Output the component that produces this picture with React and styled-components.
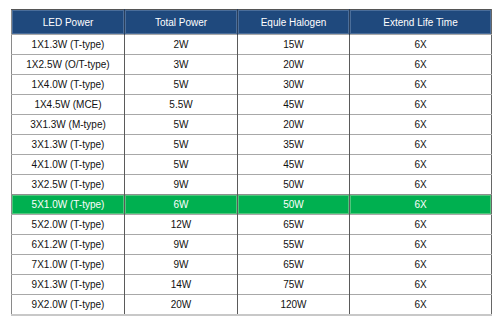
import styled, { createGlobalStyle } from "styled-components";

const GlobalStyle = createGlobalStyle`
  body {
    margin: 0;
    background: #fff;
    font-family: "Liberation Sans", Arial, sans-serif;
  }
`;

const Page = styled.div`
  padding: 9px 0 0 11px;
`;

const Table = styled.table`
  width: 481px;
  border-collapse: collapse;
  table-layout: fixed;
  font-size: 10px;
  color: #111;
  border-left: 1px solid #8a8a8a;
  border-right: 1px solid #666;
  border-top: 1px solid #555;
  border-bottom: 2px solid #c8c8c8;
`;

const Th = styled.th`
  height: 24px;
  padding: 0;
  background: #1f497d;
  color: #fff;
  font-weight: normal;
  text-align: center;
  box-shadow: inset 0 0 0 1px #4b6e9a;
  border-right: 1px solid #2a3f5c;
  &:last-child {
    border-right: none;
  }
`;

const Row = styled.tr`
  background: ${(p) => (p.$active ? "#00b050" : "#fff")};
  color: ${(p) => (p.$active ? "#fff" : "#111")};
  border-top: 1px solid ${(p) => (p.$active ? "#8f8f8f" : "#a8a8a8")};
`;

const Td = styled.td`
  height: 19px;
  padding: 0;
  text-align: center;
  border-right: 1px solid #5a5a5a;
  box-shadow: ${(p) => (p.$active ? "inset 0 0 0 1px #4fc67c" : "none")};
  &:last-child {
    border-right: none;
  }
`;

const rows = [
  ["1X1.3W (T-type)", "2W", "15W", "6X"],
  ["1X2.5W (O/T-type)", "3W", "20W", "6X"],
  ["1X4.0W (T-type)", "5W", "30W", "6X"],
  ["1X4.5W (MCE)", "5.5W", "45W", "6X"],
  ["3X1.3W (M-type)", "5W", "20W", "6X"],
  ["3X1.3W (T-type)", "5W", "35W", "6X"],
  ["4X1.0W (T-type)", "5W", "45W", "6X"],
  ["3X2.5W (T-type)", "9W", "50W", "6X"],
  ["5X1.0W (T-type)", "6W", "50W", "6X"],
  ["5X2.0W (T-type)", "12W", "65W", "6X"],
  ["6X1.2W (T-type)", "9W", "55W", "6X"],
  ["7X1.0W (T-type)", "9W", "65W", "6X"],
  ["9X1.3W (T-type)", "14W", "75W", "6X"],
  ["9X2.0W (T-type)", "20W", "120W", "6X"],
];

export default function App() {
  return (
    <Page>
      <GlobalStyle />
      <Table>
        <colgroup>
          <col style={{ width: 113 }} />
          <col style={{ width: 113 }} />
          <col style={{ width: 112 }} />
          <col />
        </colgroup>
        <thead>
          <tr>
            <Th>LED Power</Th>
            <Th>Total Power</Th>
            <Th>Equle Halogen</Th>
            <Th>Extend Life Time</Th>
          </tr>
        </thead>
        <tbody>
          {rows.map((r, i) => {
            const active = i === 8;
            return (
              <Row key={i} $active={active}>
                {r.map((c, j) => (
                  <Td key={j} $active={active}>
                    {c}
                  </Td>
                ))}
              </Row>
            );
          })}
        </tbody>
      </Table>
    </Page>
  );
}
